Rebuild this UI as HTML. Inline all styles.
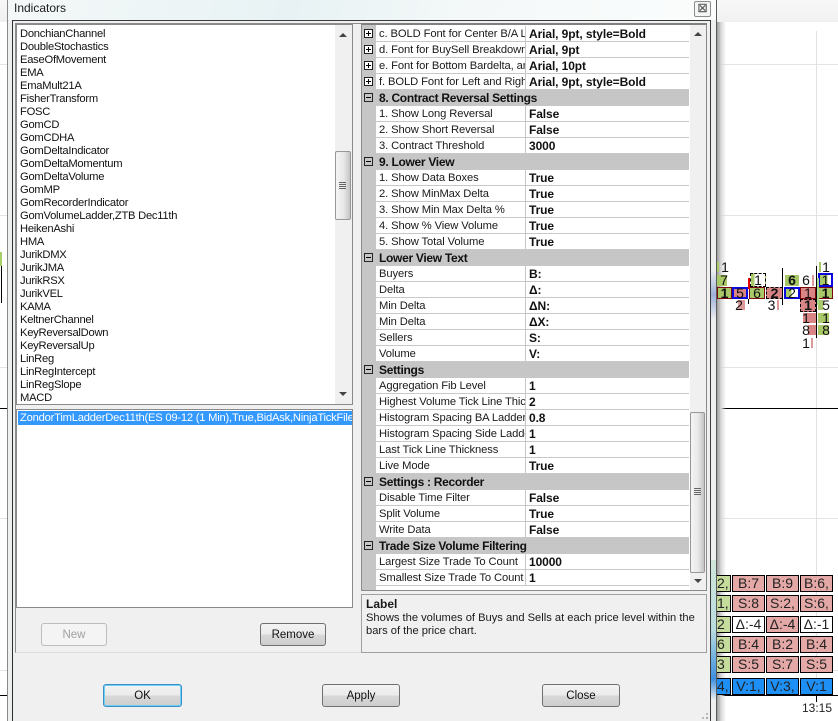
<!DOCTYPE html>
<html><head><meta charset="utf-8"><style>
html,body{margin:0;padding:0}
body{width:838px;height:721px;position:relative;overflow:hidden;background:#fff;font:12px/16px "Liberation Sans",sans-serif;color:#1a1a1a}
.a{position:absolute;box-sizing:border-box}
.t{position:absolute;white-space:nowrap}
.h{position:absolute;background:#e4e4e4;height:1px}
.k{position:absolute;background:#000}
.lst{position:absolute;left:20px;top:27px;line-height:13px;font-size:11.2px;letter-spacing:-.25px;white-space:nowrap;color:#111}
.r{height:16px;position:relative;box-sizing:border-box;border-bottom:1px solid #c8c8c8;background:#fff;width:313px;white-space:nowrap}
.r i{font-style:normal;position:absolute;left:3px;top:0;width:146px;overflow:hidden;line-height:17px;height:15px;font-size:11.2px;letter-spacing:-.1px}
.r b{position:absolute;left:153px;top:0;line-height:17px;height:15px;color:#111;letter-spacing:-.1px}
.r:before{content:"";position:absolute;left:149px;top:0;width:1px;height:16px;background:#c8c8c8}
.g{height:16px;position:relative;background:#c6c6c6;width:327px;margin-left:-14px;font-weight:bold;line-height:16px;padding-left:17px;box-sizing:border-box;color:#111;letter-spacing:-.3px}
.p{position:absolute;left:2px;width:9px;height:9px;border:1px solid #222;background:#fff;box-sizing:border-box}
.p:before{content:"";position:absolute;left:1px;top:3px;width:5px;height:1px;background:#000}
.p.pl:after{content:"";position:absolute;left:3px;top:1px;width:1px;height:5px;background:#000}
.b{position:absolute;box-sizing:border-box;border:1px solid #707070;border-radius:3px;height:23px;text-align:center;line-height:22px;font-size:11.5px;background:linear-gradient(#f3f3f3 0,#ebebeb 48%,#d8d8d8 52%,#cdcdcd 100%);color:#111}
.s{position:absolute;background:linear-gradient(90deg,#f4f4f4,#e8e8e8 55%,#c4c4c4);border:1px solid #979797;border-radius:2px;box-sizing:border-box}
.gr{position:absolute;height:1px;width:7px;background:#666}
.up{position:absolute;width:0;height:0;border-left:4px solid transparent;border-right:4px solid transparent;border-bottom:4px solid #444}
.dn{position:absolute;width:0;height:0;border-left:4px solid transparent;border-right:4px solid transparent;border-top:4px solid #444}
.c{position:absolute;box-sizing:border-box;font-size:14px;line-height:12px;text-align:center;color:#111}
.cell{position:absolute;box-sizing:border-box;border:1px solid #000;height:17px;text-align:center;font-size:14px;line-height:15px;color:#222;background:#e4a9a7;white-space:nowrap;overflow:hidden}
.f{background:#c6dc9c;text-align:left;padding-left:4px}
</style></head><body>

<!-- chart background -->
<div class="a" style="left:0;top:0;width:838px;height:22px;background:linear-gradient(#f8f8f8,#f0f0f0)"></div>
<div class="h" style="left:0;top:64px;width:838px"></div>
<div class="h" style="left:0;top:215px;width:838px"></div>
<div class="h" style="left:0;top:367px;width:838px"></div>
<div class="h" style="left:0;top:518px;width:838px"></div>
<div class="h" style="left:0;top:670px;width:838px"></div>
<div class="a" style="left:816px;top:31px;width:1px;height:664px;background:#e2e2e2"></div>
<div class="k" style="left:0;top:408px;width:838px;height:1px"></div>
<div class="k" style="left:0;top:695px;width:838px;height:1px"></div>
<div class="a" style="left:0;top:252px;width:2px;height:14px;background:#a9cf6a"></div>
<div class="k" style="left:1px;top:266px;width:1px;height:37px"></div>
<div class="a" style="left:717px;top:22px;width:9px;height:699px;background:linear-gradient(90deg,#9a9a9a,#d8d8d8 45%,rgba(255,255,255,0))"></div>

<!-- chart: upper cluster -->
<div class="a" style="left:717px;top:262px;width:2px;height:10px;background:#a9c968"></div>
<div class="c" style="left:718px;top:261px;width:14px">1</div>
<div class="a" style="left:717px;top:275px;width:10px;height:11px;background:#a9c968"></div>
<div class="c" style="left:717px;top:274px;width:14px">7</div>
<div class="a" style="left:717px;top:287px;width:15px;height:12px;background:#a9c968;border:1px solid #7d0a0a"></div>
<div class="c" style="left:717px;top:287px;width:15px;font-weight:bold">1</div>
<div class="a" style="left:732px;top:287px;width:16px;height:12px;background:#d98585;border:2px solid #0a0ae0"></div>
<div class="c" style="left:732px;top:287px;width:16px">5</div>
<div class="a" style="left:749px;top:287px;width:16px;height:12px;background:#a9c968;border:1px solid #7d0a0a"></div>
<div class="c" style="left:749px;top:287px;width:16px">6</div>
<div class="a" style="left:766px;top:287px;width:17px;height:12px;background:#d98585;border:1px dashed #000"></div>
<div class="c" style="left:766px;top:287px;width:17px;font-weight:bold">2</div>
<div class="a" style="left:784px;top:287px;width:16px;height:12px;background:linear-gradient(90deg,#a9c968 45%,#fff 45%);border:2px solid #0a0ae0"></div>
<div class="c" style="left:784px;top:287px;width:16px">2</div>
<div class="a" style="left:800px;top:287px;width:16px;height:12px;background:#d98585;border:1px solid #7d0a0a"></div>
<div class="c" style="left:800px;top:287px;width:16px">1</div>
<div class="a" style="left:818px;top:287px;width:15px;height:12px;background:#a9c968;border:1px solid #7d0a0a"></div>
<div class="c" style="left:818px;top:287px;width:15px;font-weight:bold">1</div>

<div class="a" style="left:750px;top:273px;width:16px;height:14px;background:linear-gradient(90deg,#a9c968 25%,#fff 25%);border:1px dashed #000"></div>
<div class="c" style="left:750px;top:274px;width:16px">1</div>
<div class="a" style="left:785px;top:275px;width:14px;height:11px;background:#a9c968"></div>
<div class="c" style="left:785px;top:274px;width:14px;font-weight:bold">6</div>
<div class="c" style="left:800px;top:274px;width:12px">6</div>
<div class="a" style="left:812px;top:275px;width:2px;height:11px;background:#dc9a9a"></div>
<div class="a" style="left:818px;top:273px;width:15px;height:14px;background:linear-gradient(90deg,#a9c968 70%,#fff 70%);border:2px solid #0a0ae0"></div>
<div class="c" style="left:818px;top:274px;width:15px">1</div>

<div class="a" style="left:738px;top:300px;width:7px;height:10px;background:#dc9a9a"></div>
<div class="c" style="left:732px;top:299px;width:14px">2</div>
<div class="c" style="left:766px;top:299px;width:11px">3</div>
<div class="a" style="left:777px;top:300px;width:2px;height:10px;background:#dc9a9a"></div>
<div class="a" style="left:800px;top:299px;width:16px;height:13px;background:#d98585;border:1px dashed #000"></div>
<div class="c" style="left:800px;top:299px;width:16px;font-weight:bold">1</div>
<div class="a" style="left:818px;top:300px;width:5px;height:10px;background:#a9c968"></div>
<div class="c" style="left:820px;top:299px;width:12px">5</div>

<div class="a" style="left:803px;top:313px;width:13px;height:10px;background:#d98585"></div>
<div class="c" style="left:800px;top:312px;width:12px">1</div>
<div class="a" style="left:818px;top:313px;width:11px;height:10px;background:#a9c968"></div>
<div class="c" style="left:820px;top:312px;width:12px">1</div>
<div class="a" style="left:808px;top:325px;width:8px;height:10px;background:#d98585"></div>
<div class="c" style="left:800px;top:324px;width:12px">8</div>
<div class="a" style="left:818px;top:325px;width:11px;height:10px;background:#a9c968"></div>
<div class="c" style="left:820px;top:324px;width:12px">8</div>
<div class="c" style="left:800px;top:337px;width:12px">1</div>
<div class="a" style="left:811px;top:338px;width:2px;height:10px;background:#dc9a9a"></div>
<div class="a" style="left:819px;top:262px;width:2px;height:10px;background:#a9c968"></div>
<div class="c" style="left:820px;top:261px;width:12px">1</div>

<div class="a" style="left:748px;top:278px;width:2px;height:11px;background:#e00000"></div>
<div class="k" style="left:748px;top:299px;width:1px;height:5px"></div>
<div class="k" style="left:782px;top:268px;width:1px;height:37px"></div>
<div class="k" style="left:816px;top:266px;width:1px;height:72px"></div>
<div class="a" style="left:817px;top:278px;width:2px;height:27px;background:#a9d98a"></div>

<!-- chart: ladder -->
<div class="cell f" style="left:712px;top:575px;width:19px">2,</div>
<div class="cell" style="left:732px;top:575px;width:33px">B:7</div>
<div class="cell" style="left:766px;top:575px;width:33px">B:9</div>
<div class="cell" style="left:800px;top:575px;width:33px">B:6,</div>
<div class="cell f" style="left:712px;top:595px;width:19px">1,</div>
<div class="cell" style="left:732px;top:595px;width:33px">S:8</div>
<div class="cell" style="left:766px;top:595px;width:33px">S:2,</div>
<div class="cell" style="left:800px;top:595px;width:33px">S:6,</div>
<div class="cell f" style="left:712px;top:616px;width:19px">2</div>
<div class="cell" style="left:732px;top:616px;width:33px;background:#fff">Δ:-4</div>
<div class="cell" style="left:766px;top:616px;width:33px">Δ:-4</div>
<div class="cell" style="left:800px;top:616px;width:33px;background:#fff">Δ:-1</div>
<div class="cell f" style="left:712px;top:636px;width:19px">6</div>
<div class="cell" style="left:732px;top:636px;width:33px">B:4</div>
<div class="cell" style="left:766px;top:636px;width:33px">B:2</div>
<div class="cell" style="left:800px;top:636px;width:33px">B:4</div>
<div class="cell f" style="left:712px;top:656px;width:19px">3</div>
<div class="cell" style="left:732px;top:656px;width:33px">S:5</div>
<div class="cell" style="left:766px;top:656px;width:33px">S:7</div>
<div class="cell" style="left:800px;top:656px;width:33px">S:5</div>
<div class="cell f" style="left:712px;top:678px;width:19px;background:#1e8ff5">4,</div>
<div class="cell" style="left:732px;top:678px;width:33px;background:#1e8ff5">V:1,</div>
<div class="cell" style="left:766px;top:678px;width:33px;background:#1e8ff5">V:3,</div>
<div class="cell" style="left:800px;top:678px;width:33px;background:#1e8ff5">V:1</div>
<div class="k" style="left:816px;top:696px;width:1px;height:6px"></div>
<div class="t" style="left:802px;top:701px;font-size:12px;line-height:14px;color:#222">13:15</div>

<!-- window frame -->
<div class="a" style="left:7px;top:0;width:710px;height:721px;background:#eef0f0;border-left:1px solid #8a8a8a;border-right:1px solid #5a5a5a"></div>
<div class="a" style="left:8px;top:0;width:708px;height:20px;background:linear-gradient(100deg,#f4f8f8,#e8f2f4 40%,#f4f8f8 65%,#fbfdfd)"></div>
<div class="a" style="left:711px;top:270px;width:5px;height:50px;background:linear-gradient(#eef0f0,#9fb0d8,#eef0f0)"></div>
<div class="a" style="left:711px;top:560px;width:5px;height:140px;background:linear-gradient(#d0e6da,#b8dce0 50%,#3d8fe0 85%,#eef0f0)"></div>
<div class="t" style="left:14px;top:1px;font-size:12px;line-height:15px;color:#1c1c1c">Indicators</div>
<div class="a" style="left:694px;top:1px;width:17px;height:16px;border:1px solid #8c8c8c;border-radius:2px;background:#f5f7f7;color:#555;font-size:11px;line-height:14px;text-align:center;font-weight:bold">☒</div>

<!-- dialog -->
<div class="a" style="left:12px;top:20px;width:699px;height:701px;background:#f0f0f0;border-left:1px solid #2e2e2e;border-top:1px solid #3a3a3a;border-right:1px solid #3a3a3a"></div>
<div class="a" style="left:15px;top:23px;width:692px;height:630px;border-left:1px solid #8c8c8c;border-top:1px solid #8c8c8c;border-bottom:1px solid #dcdcdc"></div>

<!-- left list -->
<div class="a" style="left:16px;top:24px;width:337px;height:381px;background:#fff;border:1px solid #8a8a8a;overflow:hidden">
<div class="lst" style="left:3px;top:2px;padding-top:1px">DonchianChannel<br>DoubleStochastics<br>EaseOfMovement<br>EMA<br>EmaMult21A<br>FisherTransform<br>FOSC<br>GomCD<br>GomCDHA<br>GomDeltaIndicator<br>GomDeltaMomentum<br>GomDeltaVolume<br>GomMP<br>GomRecorderIndicator<br>GomVolumeLadder,ZTB Dec11th<br>HeikenAshi<br>HMA<br>JurikDMX<br>JurikJMA<br>JurikRSX<br>JurikVEL<br>KAMA<br>KeltnerChannel<br>KeyReversalDown<br>KeyReversalUp<br>LinReg<br>LinRegIntercept<br>LinRegSlope<br>MACD</div>
</div>
<div class="a" style="left:335px;top:25px;width:17px;height:379px;background:#f0f0f0"></div>
<div class="up" style="left:339px;top:33px"></div>
<div class="dn" style="left:339px;top:392px"></div>
<div class="s" style="left:335px;top:151px;width:16px;height:69px"></div>
<div class="gr" style="left:339px;top:182px"></div><div class="gr" style="left:339px;top:184px"></div><div class="gr" style="left:339px;top:186px"></div><div class="gr" style="left:339px;top:188px"></div>

<!-- selected list -->
<div class="a" style="left:16px;top:409px;width:337px;height:199px;background:#fff;border:1px solid #8a8a8a"></div>
<div class="a" style="left:18px;top:411px;width:334px;height:14px;background:#3399ff;overflow:hidden;color:#fff;line-height:14px;font-size:11.2px;letter-spacing:-.22px;white-space:nowrap;padding-left:2px">ZondorTimLadderDec11th(ES 09-12 (1 Min),True,BidAsk,NinjaTickFile</div>

<div class="b" style="left:41px;top:623px;width:66px;border-color:#bdbdbd;background:#f4f4f4;color:#a0a0a0">New</div>
<div class="b" style="left:260px;top:623px;width:66px">Remove</div>

<!-- property grid -->
<div class="a" style="left:361px;top:23px;width:346px;height:568px;background:#fff;border:1px solid #8a8a8a;border-top:2px solid #808080"></div>
<div class="a" style="left:362px;top:25px;width:14px;height:565px;background:#c6c6c6"></div>
<div class="a" style="left:376px;top:26px;width:313px;height:562px;overflow:visible">
<div class="r"><span class="p pl" style="left:-12px;top:3px"></span><i>c. BOLD Font for Center B/A Lines</i><b>Arial, 9pt, style=Bold</b></div>
<div class="r"><span class="p pl" style="left:-12px;top:3px"></span><i>d. Font for BuySell Breakdown Bars</i><b>Arial, 9pt</b></div>
<div class="r"><span class="p pl" style="left:-12px;top:3px"></span><i>e. Font for Bottom Bardelta, and Vol</i><b>Arial, 10pt</b></div>
<div class="r"><span class="p pl" style="left:-12px;top:3px"></span><i>f. BOLD Font for Left and Right Bars</i><b>Arial, 9pt, style=Bold</b></div>
<div class="g"><span class="p" style="top:3px;background:none"></span>8. Contract Reversal Settings</div>
<div class="r"><i>1. Show Long Reversal</i><b>False</b></div>
<div class="r"><i>2. Show Short Reversal</i><b>False</b></div>
<div class="r"><i>3. Contract Threshold</i><b>3000</b></div>
<div class="g"><span class="p" style="top:3px;background:none"></span>9. Lower View</div>
<div class="r"><i>1. Show Data Boxes</i><b>True</b></div>
<div class="r"><i>2. Show MinMax Delta</i><b>True</b></div>
<div class="r"><i>3. Show Min Max Delta %</i><b>True</b></div>
<div class="r"><i>4. Show % View Volume</i><b>True</b></div>
<div class="r"><i>5. Show Total Volume</i><b>True</b></div>
<div class="g"><span class="p" style="top:3px;background:none"></span>Lower View Text</div>
<div class="r"><i>Buyers</i><b>B:</b></div>
<div class="r"><i>Delta</i><b>Δ:</b></div>
<div class="r"><i>Min Delta</i><b>ΔN:</b></div>
<div class="r"><i>Min Delta</i><b>ΔX:</b></div>
<div class="r"><i>Sellers</i><b>S:</b></div>
<div class="r"><i>Volume</i><b>V:</b></div>
<div class="g"><span class="p" style="top:3px;background:none"></span>Settings</div>
<div class="r"><i>Aggregation Fib Level</i><b>1</b></div>
<div class="r"><i>Highest Volume Tick Line Thickness</i><b>2</b></div>
<div class="r"><i>Histogram Spacing BA Ladder</i><b>0.8</b></div>
<div class="r"><i>Histogram Spacing Side Ladder</i><b>1</b></div>
<div class="r"><i>Last Tick Line Thickness</i><b>1</b></div>
<div class="r"><i>Live Mode</i><b>True</b></div>
<div class="g"><span class="p" style="top:3px;background:none"></span>Settings : Recorder</div>
<div class="r"><i>Disable Time Filter</i><b>False</b></div>
<div class="r"><i>Split Volume</i><b>True</b></div>
<div class="r"><i>Write Data</i><b>False</b></div>
<div class="g"><span class="p" style="top:3px;background:none"></span>Trade Size Volume Filtering</div>
<div class="r"><i>Largest Size Trade To Count</i><b>10000</b></div>
<div class="r"><i>Smallest Size Trade To Count</i><b>1</b></div>
</div>
<div class="a" style="left:690px;top:25px;width:16px;height:565px;background:#f0f0f0"></div>
<div class="up" style="left:694px;top:32px"></div>
<div class="dn" style="left:694px;top:579px"></div>
<div class="s" style="left:690px;top:412px;width:15px;height:161px"></div>
<div class="gr" style="left:694px;top:488px"></div><div class="gr" style="left:694px;top:490px"></div><div class="gr" style="left:694px;top:492px"></div><div class="gr" style="left:694px;top:494px"></div>

<!-- description -->
<div class="a" style="left:361px;top:594px;width:346px;height:59px;background:#f0f0f0;border:1px solid #a0a0a0"></div>
<div class="t" style="left:366px;top:597px;font-weight:bold;line-height:14px">Label</div>
<div class="t" style="left:366px;top:612px;line-height:13px;font-size:11.15px">Shows the volumes of Buys and Sells at each price level within the<br>bars of the price chart.</div>

<!-- bottom buttons -->
<div class="b" style="left:103px;top:684px;width:79px;border-color:#3c8fc4;box-shadow:0 0 0 1px #6fd0f5 inset">OK</div>
<div class="b" style="left:322px;top:684px;width:78px">Apply</div>
<div class="b" style="left:542px;top:684px;width:78px">Close</div>

<div class="a" style="left:706px;top:717px;width:2px;height:2px;background:#aaa"></div>
<div class="a" style="left:702px;top:717px;width:2px;height:2px;background:#bbb"></div>
<div class="a" style="left:706px;top:713px;width:2px;height:2px;background:#bbb"></div>
</body></html>
